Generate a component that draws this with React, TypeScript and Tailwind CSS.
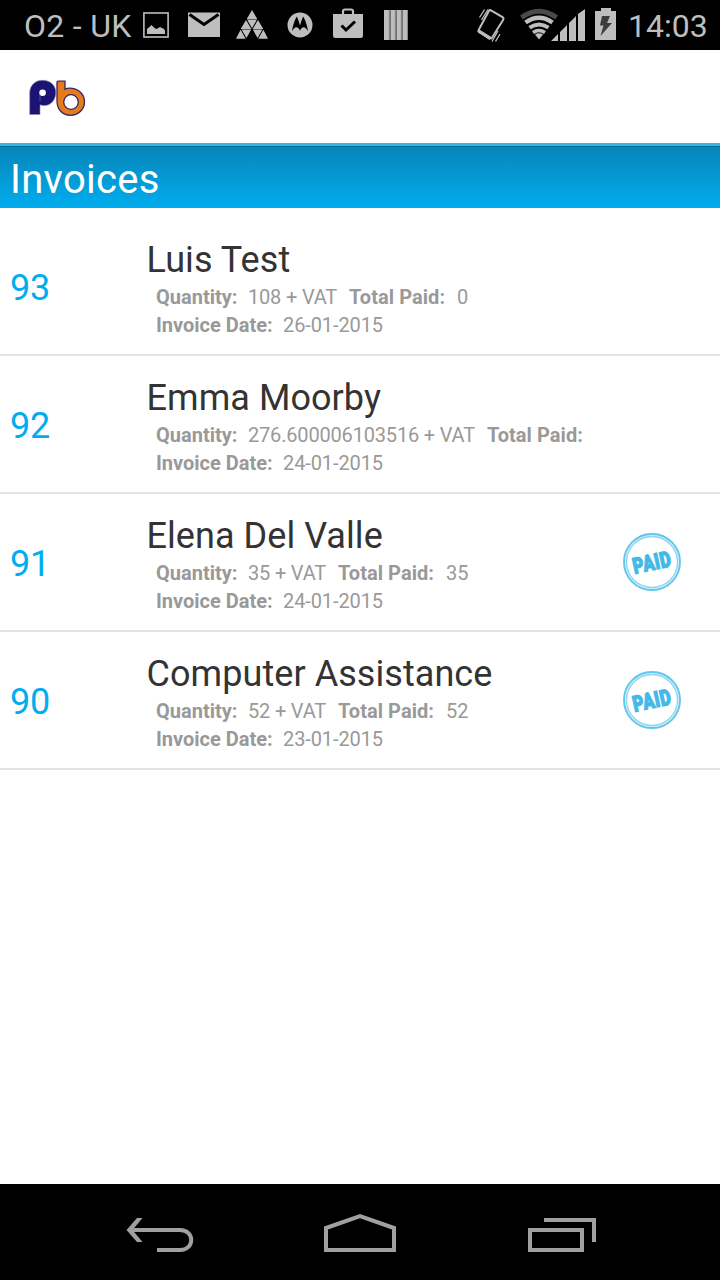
import type { ReactNode } from 'react';

interface Invoice {
  id: number;
  name: string;
  quantity: string;
  totalPaid: string;
  date: string;
  isPaid?: boolean;
}

const invoices: Invoice[] = [
  { id: 93, name: 'Luis Test', quantity: '108', totalPaid: '0', date: '26-01-2015' },
  { id: 92, name: 'Emma Moorby', quantity: '276.600006103516', totalPaid: '', date: '24-01-2015' },
  { id: 91, name: 'Elena Del Valle', quantity: '35', totalPaid: '35', date: '24-01-2015', isPaid: true },
  { id: 90, name: 'Computer Assistance', quantity: '52', totalPaid: '52', date: '23-01-2015', isPaid: true },
];

function StatusIcon({ children }: { children: ReactNode }) {
  return (
    <svg className="w-8 h-[50px] shrink-0" viewBox="0 0 32 50" fill="#bebebe">
      {children}
    </svg>
  );
}

function StatusBar() {
  return (
    <div className="h-[50px] bg-black flex items-center pl-6 text-[#bebebe] text-[32px] leading-[50px] whitespace-nowrap">
      <span className="w-[116px] pt-0.5 shrink-0 tracking-[0.3px]">O2 - UK</span>

      <div className="flex gap-4">
        {/* Screenshot */}
        <StatusIcon>
          <rect x="3.9" y="13" width="24.2" height="24" fill="none" stroke="#bebebe" strokeWidth="1.6" />
          <path d="M7 34v-5l3-2.500 1.500-1.500 3 3 2 1 3.500-2 4 2 1 2v3z" />
        </StatusIcon>

        {/* Mail */}
        <StatusIcon>
          <path d="M0 12.500h32v24.500H0z" />
          <path d="M1.500 14.500L16 24.500l14.500-10" fill="none" stroke="#000" strokeWidth="3" />
        </StatusIcon>

        {/* Triangles */}
        <StatusIcon>
          <path d="M16 10l5.300 9H10.700zM10 20l5.300 9H4.700zM22 20l5.300 9H16.700zM11 19.600h10L16 28.300zM4.600 29.800l5.100 8.900H0zM5.500 29.500h9.700l-4.700 8.500zM27.400 29.800l4.600 8.900h-9.700zM16.800 29.500h9.700l-5 8.500z" />
        </StatusIcon>

        {/* Motorola */}
        <StatusIcon>
          <circle cx="16" cy="25" r="12.500" />
          <path d="M8 31.500c.500-5 2.400-11 4.800-15 1.400 3 2.400 6.300 3.200 9 .800-2.700 1.800-6 3.200-9 2.400 4 4.300 10 4.800 15-1.200-2.500-2.800-4.200-4.300-4.200-1.700 0-2.900 1.500-3.700 3.500-.800-2-2-3.500-3.700-3.500-1.500 0-3.100 1.700-4.300 4.200z" fill="#000" />
        </StatusIcon>

        {/* Store update */}
        <StatusIcon>
          <path d="M1 14h30v21.500q0 2.500-2.500 2.500h-25Q1 38 1 35.500z" />
          <path d="M11 14v-2.500q0-2 2-2h6q2 0 2 2V14" fill="none" stroke="#bebebe" strokeWidth="2.200" />
          <path d="M9.500 25.500l4.500 4.500 9-8.500" fill="none" stroke="#000" strokeWidth="3" />
        </StatusIcon>

        {/* Bars */}
        <StatusIcon>
          <path d="M4 10h24v30H4z" />
          <path d="M9.300 10v30M15.300 10v30M21.300 10v30M27.500 10v30" stroke="#888" strokeWidth="1" />
          <path d="M10.300 10v30M16.300 10v30M22.300 10v30" stroke="#222" strokeWidth=".6" />
        </StatusIcon>
      </div>

      {/* Vibrate */}
      <svg className="w-8 h-[50px] ml-[63px] shrink-0" viewBox="0 0 32 50" fill="none" stroke="#bebebe">
        <path d="M15.500 10.200l12 7q1.500 1 .7 2.500L17 37.800q-.8 1.200-2.200.4L4.300 32q-1.300-.8-.5-2.200L14 10.800q.5-1 1.500-.6z" strokeWidth="2" />
        <path d="M3.500 29.500l12.500 7.800-1.500 2.200L3 32z" fill="#bebebe" strokeWidth="1" />
        <path d="M4.500 17.500l5-8M6.500 20l6.500-10.500M17 41.500l6-10.500M20.500 41.500l4.500-7.500" strokeWidth="1.300" />
      </svg>

      {/* Wifi + signal */}
      <svg className="w-[68px] h-[50px] ml-3 shrink-0" viewBox="0 0 68 50" fill="none" stroke="#bebebe">
        <path d="M2.500 17.500Q20 5 37.500 17.500" stroke="#4a4a4a" strokeWidth="5" />
        <path d="M6.500 22.500q13.500-9.500 27 0" strokeWidth="4.500" />
        <path d="M10.500 27.700q9.500-6.500 19 0" strokeWidth="4" />
        <path d="M14 32.500q6-4 12 0" strokeWidth="3.500" />
        <path d="M16 34.500q4-2.500 8 0l-4 5z" fill="#bebebe" stroke="none" />
        <path d="M32 41l7-7V41zM41 32l7-7v16h-7zM50 23l7-7v25h-7zM59 14l7-5v32h-7z" fill="#bebebe" stroke="none" />
      </svg>

      {/* Battery */}
      <svg className="w-[21px] h-[50px] ml-2 shrink-0" viewBox="0 0 21 50" fill="#bebebe">
        <path d="M6 8h10v3h5v29H0V11h6z" />
        <path d="M7 16h8l-3 7h5L5.500 36l3-10.500H5z" fill="#3c3c3c" />
      </svg>

      <span className="ml-3 pt-0.5">14:03</span>
    </div>
  );
}

function Logo() {
  return (
    <svg className="w-[60px] h-10" viewBox="0 0 60 40">
      <path d="M1.700 36.500V15.200C1.700 7 7.500 2.300 14.500 2.300c8 0 13.300 5 13.300 12.200S23 27.600 16.500 27.600c-2 0-3.500-.3-4.500-.8v9.700z" fill="#1b1474" stroke="#8d88a8" strokeWidth=".6" />
      <circle cx="14.600" cy="14.800" r="3.300" fill="#fff" />
      <path d="M12 15.500v8" stroke="#8d88a8" strokeWidth=".5" />
      <path d="M29 4.500q0-1.300 1.300-1.300H37v8.100c1.200-.700 3-1.100 4.500-1.100 8.500 0 15 5.500 15 13.600S50 37.300 42.500 37.300 29 32 29 23z" fill="#e47b1d" stroke="#3b2460" strokeWidth="1.300" />
      <circle cx="43" cy="24" r="7.300" fill="#fff" stroke="#3b2460" strokeWidth="1.300" />
    </svg>
  );
}

function PaidStamp() {
  return (
    <svg className="w-[60px] h-[60px] overflow-visible" viewBox="0 0 60 60">
      <circle cx="30" cy="30" r="27" fill="none" stroke="#d9f1fa" strokeWidth="4" />
      <circle cx="30" cy="30" r="28" fill="none" stroke="#62c5ec" strokeWidth="1.800" />
      <circle cx="30" cy="30" r="25.500" fill="none" stroke="#8fd6f2" strokeWidth="1.300" />
      <text
        x="30"
        y="38"
        textAnchor="middle"
        textLength="39"
        lengthAdjust="spacingAndGlyphs"
        transform="rotate(-12 30 30)"
        fill="#45b9e6"
        stroke="#45b9e6"
        strokeWidth="1.400"
        className="font-[Roboto] font-black text-[22px] leading-none tracking-[0.8px]"
      >
        PAID
      </text>
    </svg>
  );
}

function InvoiceRow({ invoice }: { invoice: Invoice }) {
  return (
    <li className="h-[138px] border-b-2 border-[#e3e3e3] flex">
      <div className="w-[146px] pl-2.5 text-4xl leading-[140px] text-[#00adef] tracking-[-0.2px]">{invoice.id}</div>
      <div className="flex-1 pt-[21px] whitespace-nowrap">
        <div className="mb-[2px] pl-[0.5px] text-4xl leading-[42px] text-[#333] tracking-[0.06px]">{invoice.name}</div>
        <div className="pl-2.5 text-xl leading-7 text-[#999]">
          <div className="flex">
            <b className="w-[92px]">Quantity:</b>
            <span className="mr-3 tracking-[-0.18px]">{invoice.quantity} + VAT</span>
            <b className="mr-3 tracking-[0.05px]">Total Paid:</b>
            <span className="tracking-[-0.1px]">{invoice.totalPaid}</span>
          </div>
          <div className="flex">
            <b className="w-[127px]">Invoice Date:</b>
            <span className="tracking-[-0.1px]">{invoice.date}</span>
          </div>
        </div>
      </div>
      {invoice.isPaid && (
        <div className="mr-[38px] self-center">
          <PaidStamp />
        </div>
      )}
    </li>
  );
}

function NavBar() {
  return (
    <div className="h-24 bg-black">
      <svg className="w-full h-full" viewBox="0 0 720 96" fill="none" stroke="#a0a0a0" strokeWidth="4">
        {/* Back */}
        <path d="M129 46h51c15 0 15 20 0 20h-23" />
        <path d="M137 34h5.500l-10 12 10 12H137l-10.500-12z" fill="#a0a0a0" stroke="none" />
        {/* Home */}
        <path d="M326 66V44l34-12 34 12v22z" />
        {/* Recents */}
        <path d="M530 46h52v20h-52zM544 36h50v22" />
      </svg>
    </div>
  );
}

export default function App() {
  return (
    <div className="w-[720px] h-[1280px] bg-white flex flex-col font-[Roboto,sans-serif] overflow-hidden">
      <StatusBar />
      <header className="h-24 border-b-[3px] border-[#33b5e5] pl-7 pt-7">
        <Logo />
      </header>
      <h1 className="h-[62px] pl-2.5 text-[40px] leading-[67px] tracking-[0.3px] text-white bg-linear-to-b from-[#0785b8] to-[#00adef] shadow-[inset_0_1px_0_#076a93]">
        Invoices
      </h1>
      <ul className="flex-1 pt-2.5">
        {invoices.map((invoice) => (
          <InvoiceRow key={invoice.id} invoice={invoice} />
        ))}
      </ul>
      <NavBar />
    </div>
  );
}
